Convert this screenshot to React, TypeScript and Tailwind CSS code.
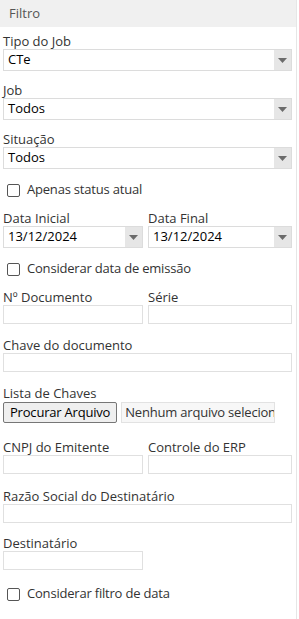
import React from 'react';

const font = { fontFamily: '"Open Sans", "Noto Sans", sans-serif' };

const Arrow: React.FC = () => (
  <div className="w-[17px] h-[20px] bg-[#e6e6e6] flex items-center justify-center">
    <svg width="9" height="5" viewBox="0 0 9 5">
      <path d="M0 0 H9 L4.5 5 Z" fill="#6b6b6b" />
    </svg>
  </div>
);

const Label: React.FC<{ text: string }> = ({ text }) => (
  <div className="h-[16px] leading-[16px] text-[13px] text-[#333] whitespace-nowrap">{text}</div>
);

const Select: React.FC<{ value: string }> = ({ value }) => (
  <div className="h-[22px] border border-[#dcdcdc] bg-white flex items-center justify-between">
    <span className="pl-[4px] text-[13px] text-black">{value}</span>
    <Arrow />
  </div>
);

const TextBox: React.FC<{ w?: string }> = ({ w = 'w-full' }) => (
  <div className={`h-[19px] border border-[#e0e0e0] bg-white ${w}`} />
);

const Check: React.FC<{ text: string }> = ({ text }) => (
  <label className="h-[18px] flex items-center gap-[7px] pl-[4px] text-[13px] tracking-[-0.2px] text-[#333]">
    <span className="w-[13px] h-[13px] border border-[#555] rounded-[2px] bg-white" />
    <span className="whitespace-nowrap">{text}</span>
  </label>
);

export default function App() {
  return (
    <div className="w-[299px] h-[619px] bg-white" style={font}>
      <div className="w-[297px] h-full border-r border-[#e6e6e6]">
        <div className="h-[27px] bg-[#f0f0f0] flex items-center pl-[9px] text-[13px] text-[#555]">Filtro</div>
        <div className="pl-[3px] pr-[4px] flex flex-col">
          <div className="mt-[6px]">
            <Label text="Tipo do Job" />
            <Select value="CTe" />
          </div>
          <div className="mt-[11px]">
            <Label text="Job" />
            <Select value="Todos" />
          </div>
          <div className="mt-[11px]">
            <Label text="Situação" />
            <Select value="Todos" />
          </div>
          <div className="mt-[12px]">
            <Check text="Apenas status atual" />
          </div>
          <div className="mt-[11px] grid grid-cols-[140px_144px] gap-x-[5px]">
            <div>
              <Label text="Data Inicial" />
              <Select value="13/12/2024" />
            </div>
            <div>
              <Label text="Data Final" />
              <Select value="13/12/2024" />
            </div>
          </div>
          <div className="mt-[12px]">
            <Check text="Considerar data de emissão" />
          </div>
          <div className="mt-[11px] grid grid-cols-[140px_144px] gap-x-[5px]">
            <div>
              <Label text="Nº Documento" />
              <TextBox />
            </div>
            <div>
              <Label text="Série" />
              <TextBox />
            </div>
          </div>
          <div className="mt-[13px]">
            <Label text="Chave do documento" />
            <TextBox />
          </div>
          <div className="mt-[13px]">
            <Label text="Lista de Chaves" />
            <div className="mt-[1px] flex items-center gap-[4px]">
              <button className="h-[21px] px-[6px] bg-[#efefef] border border-[#767676] rounded-[2px] text-[13px] tracking-[-0.2px] text-black whitespace-nowrap">
                Procurar Arquivo
              </button>
              <div className="w-[154px] h-[21px] bg-[#f7f7f7] border border-[#e2e2e2] overflow-hidden text-[13px] tracking-[-0.2px] text-[#333] leading-[19px] pl-[3px] whitespace-nowrap">
                Nenhum arquivo selecion
              </div>
            </div>
          </div>
          <div className="mt-[16px] grid grid-cols-[140px_144px] gap-x-[5px]">
            <div>
              <Label text="CNPJ do Emitente" />
              <TextBox />
            </div>
            <div>
              <Label text="Controle do ERP" />
              <TextBox />
            </div>
          </div>
          <div className="mt-[14px]">
            <Label text="Razão Social do Destinatário" />
            <TextBox />
          </div>
          <div className="mt-[12px]">
            <Label text="Destinatário" />
            <TextBox w="w-[140px]" />
          </div>
          <div className="mt-[15px]">
            <Check text="Considerar filtro de data" />
          </div>
        </div>
      </div>
    </div>
  );
}
